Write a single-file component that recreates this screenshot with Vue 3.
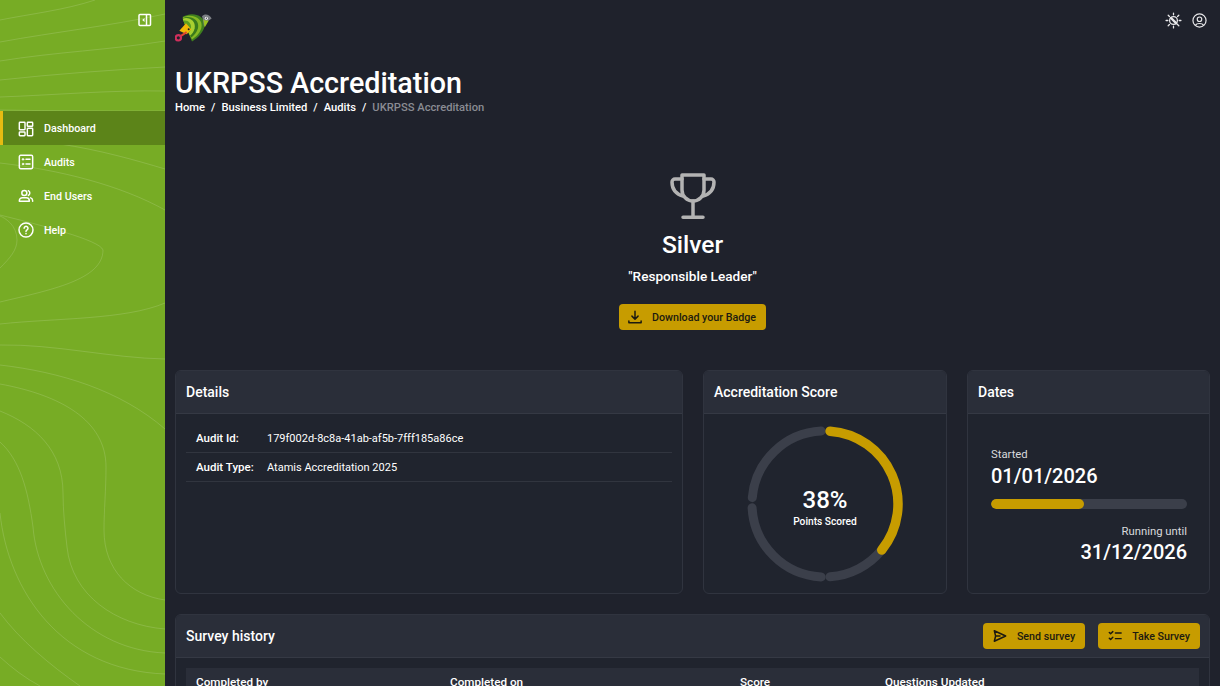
<template>
  <div class="layout">
    <aside class="sidebar">
      <svg class="contours" viewBox="0 0 165 686" preserveAspectRatio="none">
        <path v-for="(line, i) in contours" :key="i" :d="line" />
      </svg>
      <div class="sidebar-top">
        <svg class="collapse-icon" viewBox="0 0 14 14">
          <rect x="1" y="1.500" width="11.500" height="11" rx="1" fill="none" stroke="#fff" stroke-width="1.500" />
          <path d="M8.500 1.500v11" stroke="#fff" stroke-width="1.500" />
          <path d="M6.500 5v4L4.200 7z" fill="#fff" />
        </svg>
      </div>
      <nav class="nav">
        <a v-for="item in nav" :key="item.label" class="nav-item" :class="{ active: item.active }">
          <svg class="nav-icon" viewBox="0 0 24 24" fill="none" stroke="#fff" stroke-width="2.200" stroke-linecap="round" stroke-linejoin="round">
            <template v-if="item.icon === 'dash'">
              <rect x="2" y="2" width="8.500" height="11" rx="1" />
              <rect x="14" y="2" width="8" height="6" rx="1" />
              <rect x="2" y="16.500" width="8.500" height="5.500" rx="1" />
              <rect x="14" y="11" width="8" height="11" rx="1" />
            </template>
            <template v-else-if="item.icon === 'audits'">
              <rect x="2" y="2" width="20" height="20" rx="2" />
              <circle cx="7.500" cy="8" r="1.300" fill="#fff" stroke-width="1" />
              <circle cx="7.500" cy="15" r="1.300" fill="#fff" stroke-width="1" />
              <path d="M12 8h6M12 15h6" />
            </template>
            <template v-else-if="item.icon === 'users'">
              <circle cx="9.500" cy="7.500" r="3.800" />
              <path d="M2 20v-1a4.500 4.500 0 0 1 4.500-4.500h6A4.500 4.500 0 0 1 17 19v1z" />
              <path d="M15.500 4a4 4 0 0 1 0 7.200M19 14.800a4.500 4.500 0 0 1 3 4.200v1" />
            </template>
            <template v-else>
              <circle cx="12" cy="12" r="10.500" />
              <path d="M9.200 9.300a2.900 2.900 0 1 1 4.400 2.500c-1 .6-1.600 1.200-1.600 2.400" />
              <path d="M12 17.400v.1" />
            </template>
          </svg>
          <span>{{ item.label }}</span>
        </a>
      </nav>
    </aside>

    <main class="main">
      <header class="topbar">
        <svg class="logo" viewBox="15 25 111 90">
          <path d="M38 38 C70 18 114 38 102 72 C94 92 78 104 66 112 L52 78 Z" fill="#3f7f1e" />
          <path d="M38 40 C66 26 102 42 94 72 C88 90 76 98 66 106 L52 78 Z" fill="#86b823" />
          <path d="M38 42 C60 32 90 46 84 72 C80 86 72 93 64 100 L52 78 Z" fill="#3a7a1c" />
          <path d="M38 44 C56 36 78 50 74 72 C72 82 67 89 60 94 L52 78 Z" fill="#a8d030" />
          <path d="M40 50 C52 46 66 58 63 72 C62 78 59 83 56 86 L50 76 Z" fill="#5f9e20" />
          <path d="M96 36 C104 28 118 30 125 43 L112 52 L102 68 C100 56 100 46 96 36 Z" fill="#7b7e84" />
          <path d="M100 46 C106 50 112 48 116 50 L104 70 C102 62 102 54 100 46 Z" fill="#9ac31f" />
          <circle cx="109" cy="42" r="4.500" fill="#fff" />
          <circle cx="109" cy="42" r="2" fill="#1d1f24" />
          <path d="M28 80 L48 57 L64 76 L50 90 Z" fill="#f2b705" />
          <circle cx="56" cy="75" r="3" fill="#1d1f24" />
          <path d="M33 95 L50 84" stroke="#e0452f" stroke-width="6" />
          <circle cx="25" cy="101" r="8" fill="none" stroke="#cf2f5c" stroke-width="6.500" />
        </svg>
        <div class="top-actions">
          <svg class="top-icon sun" viewBox="0 0 24 24" fill="none" stroke="#e8e8ea" stroke-width="1.800" stroke-linecap="round">
            <circle cx="12" cy="12" r="5.500" />
            <path d="M8.500 8.500 16 16" stroke-width="3.400" />
            <path d="M12 1.500v2.500M12 20v2.500M1.500 12H4M20 12h2.500M4.500 4.500l1.800 1.800M17.700 17.700l1.800 1.800M4.500 19.500l1.800-1.800M17.700 6.300l1.800-1.800" />
          </svg>
          <svg class="top-icon" viewBox="0 0 24 24" fill="none" stroke="#e8e8ea" stroke-width="1.900" stroke-linecap="round">
            <circle cx="12" cy="12" r="10.500" />
            <circle cx="12" cy="10" r="3.600" />
            <path d="M6 19c1.500-3 10.500-3 12 0" />
          </svg>
        </div>
      </header>

      <h1 class="page-title">UKRPSS Accreditation</h1>
      <div class="crumbs">
        <template v-for="c in crumbs" :key="c">
          <span class="crumb">{{ c }}</span>
          <span class="sep">/</span>
        </template>
        <span class="crumb current">UKRPSS Accreditation</span>
      </div>

      <section class="badge">
        <svg class="trophy" viewBox="0 0 46 46" fill="none" stroke="#b3b3b3" stroke-width="3.500" stroke-linecap="round" stroke-linejoin="round">
          <path d="M12 2h22v15a11 11 0 0 1-22 0z" />
          <path d="M12 6H5a3 3 0 0 0-3 3c0 7 4 12 11 14M34 6h7a3 3 0 0 1 3 3c0 7-4 12-11 14" />
          <path d="M23 28v16M13 44.200h20" />
        </svg>
        <div class="badge-name">Silver</div>
        <div class="badge-quote">"Responsible Leader"</div>
        <button class="btn download">
          <svg class="btn-icon" viewBox="0 0 16 16" fill="none" stroke="#1c1a10" stroke-width="1.700" stroke-linecap="round" stroke-linejoin="round">
            <path d="M8 1.500v8.500M4.500 7 8 10.500 11.500 7M1 12.500v2h14v-2" />
          </svg>
          Download your Badge
        </button>
      </section>

      <section class="cards">
        <div class="card">
          <div class="card-head">Details</div>
          <div class="card-body details">
            <div class="detail-row">
              <b>Audit Id:</b><span>179f002d-8c8a-41ab-af5b-7fff185a86ce</span>
            </div>
            <div class="detail-row">
              <b>Audit Type:</b><span>Atamis Accreditation 2025</span>
            </div>
          </div>
        </div>

        <div class="card">
          <div class="card-head">Accreditation Score</div>
          <div class="card-body score">
            <svg class="ring" viewBox="0 0 156 156" fill="none" stroke-width="9" stroke-linecap="round">
              <path v-for="(seg, i) in ringTrack" :key="i" :d="seg" stroke="#3b3f4a" />
              <path :d="ringValue" stroke="#c79c00" stroke-width="9.500" />
            </svg>
            <div class="ring-label">
              <div class="ring-pct">38%</div>
              <div class="ring-sub">Points Scored</div>
            </div>
          </div>
        </div>

        <div class="card">
          <div class="card-head">Dates</div>
          <div class="card-body dates">
            <div class="date-label">Started</div>
            <div class="date-value">01/01/2026</div>
            <div class="progress"><div class="progress-fill" :style="{ width: progress + '%' }"></div></div>
            <div class="date-label right">Running until</div>
            <div class="date-value right until">31/12/2026</div>
          </div>
        </div>
      </section>

      <section class="card survey">
        <div class="card-head survey-head">
          <span>Survey history</span>
          <div class="survey-actions">
            <button class="btn small">
              <svg class="btn-icon" viewBox="0 0 16 16" fill="none" stroke="#1c1a10" stroke-width="1.700" stroke-linejoin="round" stroke-linecap="round">
                <path d="M1.500 2 14.500 8 1.500 14 3 8zM3 8H8" />
              </svg>
              Send survey
            </button>
            <button class="btn small">
              <svg class="btn-icon" viewBox="0 0 16 16" fill="none" stroke="#1c1a10" stroke-width="1.700" stroke-linecap="round" stroke-linejoin="round">
                <path d="M1.500 4 3 5.500 5.500 3M1.500 10.500 3 12l2.500-2.500M8.500 4.500H15M8.500 11H15" />
              </svg>
              Take Survey
            </button>
          </div>
        </div>
        <div class="survey-body">
          <table class="table">
            <thead>
              <tr>
                <th v-for="col in columns" :key="col.label" :style="{ width: col.width + 'px' }">{{ col.label }}</th>
              </tr>
            </thead>
          </table>
        </div>
      </section>
    </main>
  </div>
</template>

<script setup>
const nav = [
  { label: 'Dashboard', icon: 'dash', active: true },
  { label: 'Audits', icon: 'audits' },
  { label: 'End Users', icon: 'users' },
  { label: 'Help', icon: 'help' },
]

const crumbs = ['Home', 'Business Limited', 'Audits']

const columns = [
  { label: 'Completed by', width: 254 },
  { label: 'Completed on', width: 290 },
  { label: 'Score', width: 145 },
  { label: 'Questions Updated', width: 324 },
]

const progress = 47.500

const contours = [
  'M0 20 C30 14 65 10 95 0',
  'M0 42 C55 32 110 26 165 14',
  'M0 61 C55 52 110 50 165 41',
  'M0 80 C55 74 110 70 165 67',
  'M0 97 C55 95 110 90 165 91',
  'M0 110 C55 111 110 111 165 111',
  'M60 144 C100 150 135 160 165 169',
  'M0 163 C60 170 120 185 165 210',
  'M0 215 C40 225 100 240 103 250 C103 280 50 290 0 302',
  'M0 268 C10 258 17 250 17 240 C17 225 5 218 0 216',
  'M0 324 C55 318 125 320 165 303',
  'M0 345 C55 344 110 358 165 359',
  'M0 365 C60 372 120 390 165 429',
  'M0 384 C60 395 106 420 106 467 C106 490 104 510 104 530 C104 570 130 595 165 600',
  'M0 411 C35 425 63 450 63 493 C63 510 65 530 67 547 C72 595 115 625 165 629',
  'M0 442 C20 460 28 490 33 527 C38 590 90 650 165 653',
  'M0 513 C8 590 60 670 165 674',
  'M0 613 C20 640 50 665 80 686',
  'M0 657 C12 668 25 678 40 686',
]

// points on the score ring, angle in degrees clockwise from the top
const R = 73
const point = deg => {
  const a = (deg - 90) * Math.PI / 180
  return `${(78 + R * Math.cos(a)).toFixed(2)} ${(78 + R * Math.sin(a)).toFixed(2)}`
}
const arc = (from, to) => `M${point(from)} A${R} ${R} 0 ${to - from > 180 ? 1 : 0} 1 ${point(to)}`

const ringValue = arc(4, 129)
const ringTrack = [arc(129, 176), arc(183, 267), arc(275, 357)]
</script>

<style scoped>
.layout {
  display: flex;
  height: 686px;
  overflow: hidden;
  background: #1f222c;
  color: #fff;
  font-family: Roboto, "Noto Sans", sans-serif;
}

.sidebar {
  width: 165px;
  flex-shrink: 0;
  background: #77ac25;
  position: relative;
}

.contours {
  position: absolute;
  inset: 0;
  width: 100%;
  height: 100%;
  fill: none;
  stroke: rgba(255, 255, 255, 0.14);
  stroke-width: 1;
}

.sidebar-top {
  height: 111px;
  display: flex;
  justify-content: flex-end;
  align-items: flex-start;
  padding: 13px 13px 0 0;
  box-sizing: border-box;
  position: relative;
}

.collapse-icon {
  width: 14px;
  height: 14px;
}

.nav {
  position: relative;
}

.nav-item {
  height: 34px;
  box-sizing: border-box;
  display: flex;
  align-items: center;
  gap: 10px;
  padding-left: 15px;
  font-size: 10.700px;
  font-weight: 500;
  color: #fff;
  border-left: 3px solid transparent;
}

.nav-item.active {
  background: #5c8419;
  border-left-color: #e6bb12;
  padding-top: 1px;
}

.nav-icon {
  width: 16px;
  height: 16px;
}

.main {
  flex: 1;
  padding: 0 10px;
  min-width: 0;
}

.topbar {
  height: 65px;
  display: flex;
  justify-content: space-between;
  align-items: flex-start;
  padding-top: 12px;
  box-sizing: border-box;
}

.logo {
  width: 37px;
  height: 31px;
}

.top-actions {
  display: flex;
  align-items: center;
  gap: 10px;
  padding-right: 3px;
}

.top-icon {
  width: 15px;
  height: 15px;
}

.top-icon.sun {
  width: 17px;
  height: 17px;
}

.page-title {
  margin: 0;
  font-size: 28.700px;
  font-weight: 500;
  line-height: 36px;
}

.crumbs {
  display: flex;
  gap: 6px;
  font-size: 11.200px;
  font-weight: 500;
  line-height: 16px;
  margin-top: -1px;
}

.crumb.current {
  color: #8a8c93;
}

.badge {
  display: flex;
  flex-direction: column;
  align-items: center;
  padding-top: 57px;
}

.trophy {
  width: 46px;
  height: 46px;
}

.badge-name {
  font-size: 24.500px;
  font-weight: 500;
  line-height: 30px;
  margin-top: 11px;
}

.badge-quote {
  font-size: 13.600px;
  font-weight: 500;
  line-height: 18px;
  margin-top: 7px;
}

.btn {
  display: flex;
  align-items: center;
  gap: 10px;
  height: 26px;
  padding: 0 10px;
  border: 0;
  border-radius: 4px;
  background: #c79c00;
  color: #1c1a10;
  font-family: inherit;
  font-size: 10.700px;
  font-weight: 500;
}

.btn.download {
  margin-top: 19px;
  padding-left: 9px;
}

.btn-icon {
  width: 14px;
  height: 14px;
}

.cards {
  display: grid;
  grid-template-columns: 508px 244px 243px;
  gap: 20px;
  margin-top: 40px;
}

.card {
  background: #20242e;
  border: 1px solid #30343f;
  border-radius: 6px;
  box-sizing: border-box;
  height: 224px;
  overflow: hidden;
}

.card-head {
  height: 43px;
  box-sizing: border-box;
  display: flex;
  align-items: center;
  padding: 0 10px;
  background: #2a2e39;
  border-bottom: 1px solid #353944;
  font-size: 14px;
  font-weight: 500;
}

.details {
  padding: 10px 10px 0;
}

.detail-row {
  display: flex;
  height: 29px;
  box-sizing: border-box;
  align-items: center;
  padding-left: 10px;
  border-bottom: 1px solid #31353f;
  font-size: 11px;
}

.detail-row b {
  width: 71px;
  font-size: 11.500px;
  font-weight: 500;
}

.score {
  position: relative;
  display: flex;
  justify-content: center;
  padding-top: 12px;
}

.ring {
  width: 156px;
  height: 156px;
}

.ring-label {
  position: absolute;
  top: 72px;
  left: 0;
  right: 0;
  text-align: center;
}

.ring-pct {
  font-size: 24px;
  font-weight: 500;
  line-height: 28px;
}

.ring-sub {
  font-size: 10.200px;
  font-weight: 500;
  line-height: 15px;
}

.dates {
  padding: 33px 22px 0 23px;
}

.date-label {
  font-size: 11.300px;
  line-height: 15px;
  color: #d9dadc;
}

.date-value {
  font-size: 20px;
  font-weight: 500;
  line-height: 28px;
}

.date-value.until {
  margin-top: -1px;
}

.right {
  text-align: right;
}

.progress {
  height: 10px;
  border-radius: 5px;
  background: #3b3f4a;
  margin: 9px 0 15px;
  overflow: hidden;
}

.progress-fill {
  height: 100%;
  background: #c79c00;
  border-radius: 5px;
}

.survey {
  margin-top: 20px;
  height: 200px;
}

.survey-head {
  justify-content: space-between;
  padding-right: 9px;
}

.survey-actions {
  display: flex;
  gap: 13px;
}

.survey-body {
  padding: 10px;
}

.table {
  width: 100%;
  border-collapse: collapse;
  table-layout: fixed;
  background: #2a2e39;
}

.table th {
  box-sizing: border-box;
  text-align: left;
  padding: 7px 10px;
  font-size: 11.700px;
  font-weight: 500;
}
</style>

<style>
html, body {
  overflow: hidden;
  background: #1f222c;
}
</style>
